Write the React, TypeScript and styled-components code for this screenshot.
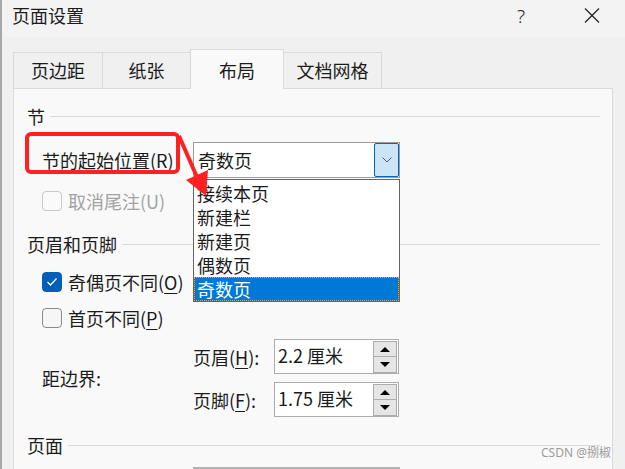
import React from 'react';
import styled, { createGlobalStyle } from 'styled-components';

const GlobalStyle = createGlobalStyle`
  html, body { margin: 0; padding: 0; }
  body {
    font-family: "Noto Sans CJK SC", "Noto Sans", sans-serif;
    -webkit-font-smoothing: antialiased;
  }
  * { box-sizing: border-box; }
`;

const Window = styled.div`
  position: relative;
  width: 625px;
  height: 469px;
  overflow: hidden;
  background: #f0f0f0;
  border-left: 2px solid #a8a8a8;
  color: #1b1b1b;
  font-size: 18px;
`;

const TitleBar = styled.div`
  display: flex;
  align-items: flex-start;
  height: 37px;
  padding: 0 10px 0 10px;
  background: #f3f3f3;
`;

const Title = styled.div`
  line-height: 31px;
`;

const Controls = styled.div`
  display: flex;
  gap: 25px;
  margin-left: auto;
`;

const ControlButton = styled.div`
  width: 46px;
  height: 31px;
  display: flex;
  align-items: center;
  justify-content: center;
  font-family: "Noto Sans", sans-serif;
  font-weight: 300;
  font-size: 19px;
  color: #222;
`;

const TabStrip = styled.div`
  display: flex;
  align-items: flex-end;
  height: 39px;
  margin-top: 12px;
  padding-left: 11px;
`;

const Tab = styled.div<{ $w: number; $active?: boolean }>`
  width: ${(p) => p.$w}px;
  height: ${(p) => (p.$active ? 40 : 36)}px;
  margin-left: -1px;
  margin-bottom: ${(p) => (p.$active ? -1 : 0)}px;
  z-index: ${(p) => (p.$active ? 1 : 0)};
  display: flex;
  align-items: flex-end;
  justify-content: center;
  padding-bottom: ${(p) => (p.$active ? 7 : 6)}px;
  line-height: 24px;
  border: 1px solid #dadada;
  border-bottom: none;
  background: ${(p) => (p.$active ? '#f9f9f9' : '#f0f0f0')};

  &:first-child {
    margin-left: 0;
  }
`;

const Panel = styled.div`
  position: relative;
  margin-left: 11px;
  width: 600px;
  height: 400px;
  padding: 0 12px 0 13px;
  border: 1px solid #dadada;
  background: #f9f9f9;
`;

const SectionHeader = styled.div<{ $top: number }>`
  display: flex;
  align-items: center;
  gap: 5px;
  height: 24px;
  margin-top: ${(p) => p.$top}px;
  line-height: 24px;
`;

const Rule = styled.div`
  flex: 1;
  height: 1px;
  background: #dadada;
`;

const FieldRow = styled.div<{ $top: number }>`
  display: flex;
  align-items: center;
  height: 36px;
  margin-top: ${(p) => p.$top}px;
  padding-left: 15px;
`;

const FieldLabel = styled.div`
  width: 151px;
  line-height: 24px;
`;

const Key = styled.span`
  text-decoration: underline;
  text-underline-offset: 3px;
  text-decoration-thickness: 1px;
`;

const Combo = styled.div`
  display: flex;
  align-items: center;
  width: 207px;
  height: 36px;
  padding-left: 4px;
  border: 1px solid #9c9c9c;
  background: #fff;
  line-height: 24px;
`;

const ComboButton = styled.div`
  display: flex;
  align-items: center;
  justify-content: center;
  width: 25px;
  height: 34px;
  margin-left: auto;
  border: 1px solid #0067c0;
  border-radius: 2px;
  background: #cce4f7;
`;

const DropList = styled.div`
  position: absolute;
  left: 179px;
  top: 90px;
  z-index: 2;
  width: 207px;
  padding-top: 1px;
  border: 1px solid #646464;
  background: #fff;
`;

const DropItem = styled.div<{ $selected?: boolean }>`
  height: 24px;
  padding-left: 3px;
  line-height: 24px;
  color: ${(p) => (p.$selected ? '#fff' : '#1b1b1b')};
  background: ${(p) => (p.$selected ? '#0078d7' : 'transparent')};
  outline: ${(p) => (p.$selected ? '1px dotted #e9a443' : 'none')};
  outline-offset: -1px;
`;

const CheckRow = styled.div<{ $top: number; $disabled?: boolean }>`
  display: flex;
  align-items: center;
  gap: 6px;
  height: 26px;
  margin-top: ${(p) => p.$top}px;
  padding-left: 15px;
  line-height: 24px;
  color: ${(p) => (p.$disabled ? '#a3a3a3' : '#1b1b1b')};
`;

const CheckLabel = styled.span`
  white-space: nowrap;
`;

const Box = styled.div<{ $checked?: boolean; $disabled?: boolean }>`
  display: flex;
  align-items: center;
  justify-content: center;
  width: 20px;
  height: 20px;
  border-radius: 4px;
  border: 1px solid
    ${(p) => (p.$checked ? '#005fb8' : p.$disabled ? '#c9c9c9' : '#8a8a8a')};
  background: ${(p) => (p.$checked ? '#005fb8' : p.$disabled ? '#fafafa' : '#f6f6f6')};
`;

const MarginGroup = styled.div`
  display: flex;
  align-items: center;
  margin-top: 8px;
  padding-left: 15px;
`;

const GroupLabel = styled.div`
  width: 151px;
  line-height: 24px;
`;

const SpinColumn = styled.div`
  display: flex;
  flex-direction: column;
  gap: 8px;
`;

const SpinRow = styled.div`
  display: flex;
  align-items: center;
  height: 35px;
`;

const SpinLabel = styled.div`
  width: 81px;
  line-height: 24px;
`;

const SpinBox = styled.div`
  display: flex;
  align-items: flex-start;
  width: 125px;
  height: 35px;
  padding: 1px 1px 0 3px;
  border: 1px solid #adadad;
  background: #fff;
  line-height: 28px;
`;

const Spinner = styled.div`
  display: flex;
  flex-direction: column;
  margin-left: auto;
  width: 24px;
`;

const SpinButton = styled.div<{ $down?: boolean }>`
  display: flex;
  align-items: center;
  justify-content: center;
  height: 16px;
  border: 1px solid #adadad;
  border-top: ${(p) => (p.$down ? 'none' : '1px solid #adadad')};
  background: #e5e5e5;
`;

const Triangle = styled.div<{ $down?: boolean }>`
  width: 0;
  height: 0;
  border-left: 5px solid transparent;
  border-right: 5px solid transparent;
  ${(p) => (p.$down ? 'border-top: 5px solid #000;' : 'border-bottom: 5px solid #000;')}
`;

const NextBox = styled.div`
  width: 207px;
  height: 30px;
  margin-top: 10px;
  margin-left: 166px;
  border-top: 2px solid #b2b2b2;
`;

const Annotation = styled.svg`
  position: absolute;
  left: -2px;
  top: 0;
  z-index: 3;
  pointer-events: none;
`;

const Watermark = styled.div`
  position: absolute;
  right: 14px;
  top: 444px;
  z-index: 3;
  font-family: "Noto Sans", "Noto Sans CJK SC", sans-serif;
  font-size: 12px;
  line-height: 18px;
  color: #9b9b9b;
`;

const tabs = [
  { label: '页边距', w: 90 },
  { label: '纸张', w: 89 },
  { label: '布局', w: 94, active: true },
  { label: '文档网格', w: 99 },
];

const options = ['接续本页', '新建栏', '新建页', '偶数页', '奇数页'];

const Check = () => (
  <svg width="12" height="10" viewBox="0 0 12 10">
    <polyline points="1.5,5 4.5,8 10.5,1.5" fill="none" stroke="#fff" strokeWidth="1.3" />
  </svg>
);

const App = () => {
  return (
    <Window>
      <GlobalStyle />
      <TitleBar>
        <Title>页面设置</Title>
        <Controls>
          <ControlButton>?</ControlButton>
          <ControlButton>
            <svg width="16" height="15" viewBox="0 0 16 15">
              <line x1="1" y1="0.5" x2="15" y2="14.5" stroke="#222" strokeWidth="1.2" />
              <line x1="15" y1="0.5" x2="1" y2="14.5" stroke="#222" strokeWidth="1.2" />
            </svg>
          </ControlButton>
        </Controls>
      </TitleBar>

      <TabStrip>
        {tabs.map((t) => (
          <Tab key={t.label} $w={t.w} $active={t.active}>
            {t.label}
          </Tab>
        ))}
      </TabStrip>

      <Panel>
        <SectionHeader $top={15}>
          节<Rule />
        </SectionHeader>

        <FieldRow $top={14}>
          <FieldLabel>
            节的起始位置(<Key>R</Key>)
          </FieldLabel>
          <Combo>
            奇数页
            <ComboButton>
              <svg width="10" height="6" viewBox="0 0 10 6">
                <polyline points="0.5,0.5 5,5 9.5,0.5" fill="none" stroke="#5c5c5c" strokeWidth="1" />
              </svg>
            </ComboButton>
          </Combo>
        </FieldRow>

        <DropList>
          {options.map((o, i) => (
            <DropItem key={o} $selected={i === options.length - 1}>
              {o}
            </DropItem>
          ))}
        </DropList>

        <CheckRow $top={10} $disabled>
          <Box $disabled />
          <CheckLabel>取消尾注(U)</CheckLabel>
        </CheckRow>

        <SectionHeader $top={18}>
          页眉和页脚<Rule />
        </SectionHeader>

        <CheckRow $top={13}>
          <Box $checked>
            <Check />
          </Box>
          <CheckLabel>
            奇偶页不同(<Key>O</Key>)
          </CheckLabel>
        </CheckRow>
        <CheckRow $top={10}>
          <Box />
          <CheckLabel>
            首页不同(<Key>P</Key>)
          </CheckLabel>
        </CheckRow>

        <MarginGroup>
          <GroupLabel>距边界:</GroupLabel>
          <SpinColumn>
            <SpinRow>
              <SpinLabel>
                页眉(<Key>H</Key>):
              </SpinLabel>
              <SpinBox>
                2.2 厘米
                <Spinner>
                  <SpinButton>
                    <Triangle />
                  </SpinButton>
                  <SpinButton $down>
                    <Triangle $down />
                  </SpinButton>
                </Spinner>
              </SpinBox>
            </SpinRow>
            <SpinRow>
              <SpinLabel>
                页脚(<Key>F</Key>):
              </SpinLabel>
              <SpinBox>
                1.75 厘米
                <Spinner>
                  <SpinButton>
                    <Triangle />
                  </SpinButton>
                  <SpinButton $down>
                    <Triangle $down />
                  </SpinButton>
                </Spinner>
              </SpinBox>
            </SpinRow>
          </SpinColumn>
        </MarginGroup>

        <SectionHeader $top={16}>
          页面<Rule />
        </SectionHeader>
        <NextBox />
      </Panel>

      <Annotation width="625" height="469" viewBox="0 0 625 469">
        <rect x="27" y="134" width="151" height="38" rx="4" fill="none" stroke="#ff2121" strokeWidth="4" />
        <line x1="179" y1="136" x2="197" y2="177" stroke="#ff2121" strokeWidth="4" />
        <polygon points="206,196 186,180 208,170" fill="#ff2121" />
      </Annotation>

      <Watermark>CSDN @捌椒</Watermark>
    </Window>
  );
};

export default App;
